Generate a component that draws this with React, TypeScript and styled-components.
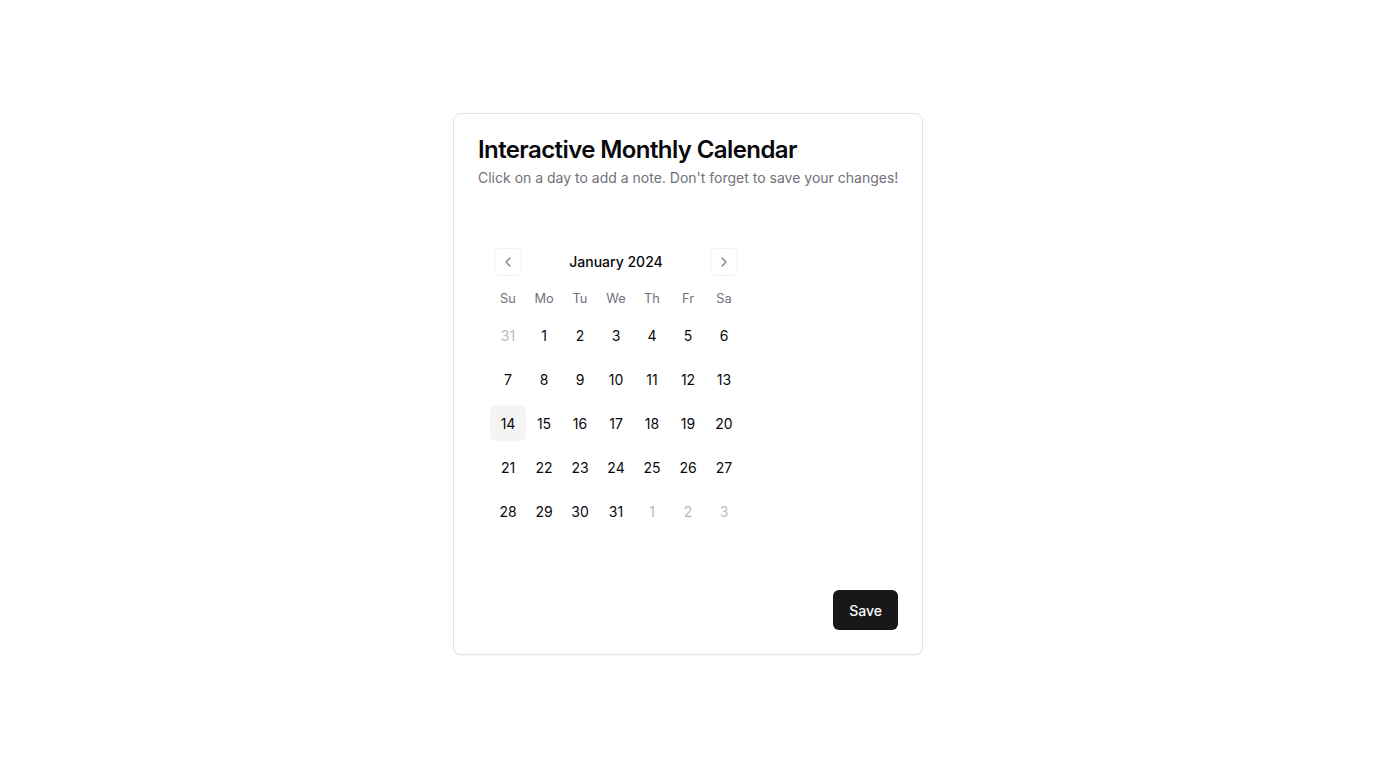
import React, { useState } from "react";
import styled, { createGlobalStyle } from "styled-components";
import { ChevronLeft, ChevronRight } from "lucide-react";

const Global = createGlobalStyle`
  * { box-sizing: border-box; }
  html, body { margin: 0; padding: 0; background: #ffffff; }
  body { font-family: Inter, "Noto Sans", sans-serif; color: #09090b; }
`;

const Page = styled.div`
  min-height: 100vh;
  display: flex;
  align-items: center;
  justify-content: center;
`;

const Card = styled.div`
  width: 470px;
  border: 1px solid #e4e4e7;
  border-radius: 8px;
  background: #fff;
  box-shadow: 0 1px 2px 0 rgba(0, 0, 0, 0.05);
`;

const Header = styled.div`
  display: flex;
  flex-direction: column;
  gap: 6px;
  padding: 24px 24px 24px;
`;

const Title = styled.h2`
  margin: 0;
  font-size: 24px;
  line-height: 24px;
  font-weight: 600;
  letter-spacing: -0.025em;
  color: #09090b;
`;

const Description = styled.p`
  margin: 0;
  font-size: 14px;
  line-height: 20px;
  color: #71717a;
  white-space: nowrap;
`;

const Content = styled.div`
  padding: 0 24px 24px;
`;

const Calendar = styled.div`
  display: inline-block;
  padding: 12px;
  margin: 22px 0 25px;
`;

const Caption = styled.div`
  position: relative;
  display: flex;
  justify-content: center;
  align-items: center;
  padding-top: 4px;
  height: 24px;
  box-sizing: content-box;
  margin-bottom: 13px;
`;

const CaptionLabel = styled.div`
  font-size: 14px;
  line-height: 20px;
  font-weight: 500;
`;

const NavButton = styled.button<{ $side: "left" | "right" }>`
  position: absolute;
  top: 2px;
  ${(p) => (p.$side === "left" ? "left: 4px;" : "right: 4px;")}
  width: 28px;
  height: 28px;
  padding: 0;
  display: flex;
  align-items: center;
  justify-content: center;
  background: transparent;
  border: 1px solid #e4e4e7;
  border-radius: 6px;
  color: #09090b;
  opacity: 0.5;
  cursor: pointer;
`;

const Grid = styled.div`
  display: grid;
  grid-template-columns: repeat(7, 36px);
  row-gap: 8px;
`;

const HeadCell = styled.div`
  width: 36px;
  height: 22px;
  display: flex;
  align-items: center;
  justify-content: center;
  font-size: 12.8px;
  color: #71717a;
`;

const Day = styled.button<{ $outside?: boolean; $today?: boolean }>`
  width: 36px;
  height: 36px;
  padding: 0;
  border: none;
  border-radius: 6px;
  font-family: inherit;
  font-size: 14px;
  font-weight: 400;
  background: ${(p) => (p.$today ? "#f4f4f5" : "transparent")};
  color: ${(p) => (p.$outside ? "rgba(113,113,122,0.5)" : "#09090b")};
  cursor: pointer;
`;

const Footer = styled.div`
  display: flex;
  justify-content: flex-end;
  padding: 0 24px 24px;
`;

const SaveButton = styled.button`
  height: 40px;
  padding: 0 16px;
  border: none;
  border-radius: 6px;
  background: #18181b;
  color: #fafafa;
  font-family: inherit;
  font-size: 14px;
  font-weight: 500;
  cursor: pointer;
`;

const weekdays = ["Su", "Mo", "Tu", "We", "Th", "Fr", "Sa"];

type Cell = { n: number; outside: boolean };

const cells: Cell[] = [
  { n: 31, outside: true },
  ...Array.from({ length: 31 }, (_, i) => ({ n: i + 1, outside: false })),
  { n: 1, outside: true },
  { n: 2, outside: true },
  { n: 3, outside: true },
];

export default function App() {
  const [selected, setSelected] = useState<number | null>(null);
  return (
    <>
      <Global />
      <Page>
        <Card>
          <Header>
            <Title>Interactive Monthly Calendar</Title>
            <Description>
              Click on a day to add a note. Don't forget to save your changes!
            </Description>
          </Header>
          <Content>
            <Calendar>
              <Caption>
                <NavButton $side="left" aria-label="Previous month">
                  <ChevronLeft size={16} strokeWidth={2} />
                </NavButton>
                <CaptionLabel>January 2024</CaptionLabel>
                <NavButton $side="right" aria-label="Next month">
                  <ChevronRight size={16} strokeWidth={2} />
                </NavButton>
              </Caption>
              <Grid>
                {weekdays.map((w) => (
                  <HeadCell key={w}>{w}</HeadCell>
                ))}
                {cells.map((c, i) => (
                  <Day
                    key={i}
                    $outside={c.outside}
                    $today={(!c.outside && c.n === 14) || selected === i}
                    onClick={() => setSelected(i)}
                  >
                    {c.n}
                  </Day>
                ))}
              </Grid>
            </Calendar>
          </Content>
          <Footer>
            <SaveButton>Save</SaveButton>
          </Footer>
        </Card>
      </Page>
    </>
  );
}
